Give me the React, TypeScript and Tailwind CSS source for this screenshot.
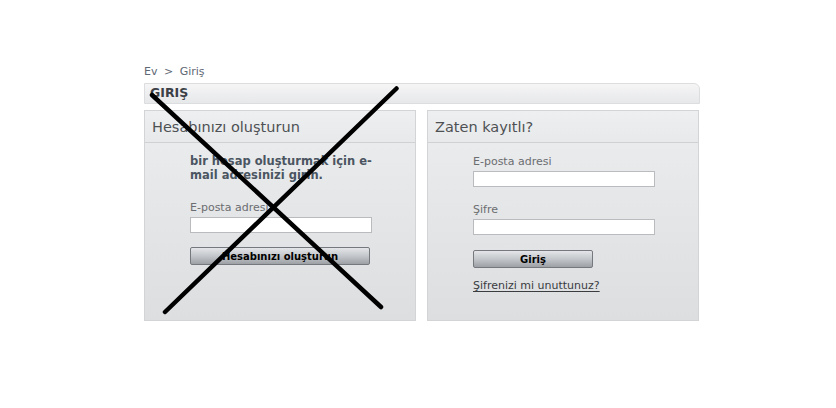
import React from 'react'

const font = "font-['DejaVu_Sans',Verdana,sans-serif]"

function Field({ label, top }: { label: string; top: string }) {
  return (
    <div className={top}>
      <div className="h-[14px] text-[11px] leading-[14px] text-[#6b6d70]">{label}</div>
      <div className="mt-[2px] h-[16px] w-[182px] border border-[#b9bbbe] bg-white" />
    </div>
  )
}

function Panel({ title, children }: { title: string; children: React.ReactNode }) {
  return (
    <div className="flex h-[211px] flex-col border border-[#d2d4d6] bg-[#ebecee]">
      <div className="flex h-[32px] items-center border-b border-[#cfd1d3] bg-gradient-to-b from-[#eeeff1] to-[#e8e9eb] pl-[7px] pt-[3px] text-[14.5px] text-[#4e5154]">
        {title}
      </div>
      <div className="flex-1 bg-gradient-to-b from-[#eaebed] to-[#dcdee0] pl-[45px]">{children}</div>
    </div>
  )
}

export default function App() {
  return (
    <div className={`relative h-[408px] w-[836px] overflow-hidden bg-white ${font}`}>
      <div className="ml-[144px] w-[556px] pt-[65px]">
        {/* breadcrumb */}
        <div className="h-[14px] text-[11px] leading-[14px] text-[#5f6974]">
          Ev <span className="mx-[3px]">&gt;</span> Giriş
        </div>

        {/* title bar */}
        <div className="mt-[4px] flex h-[21px] items-center rounded-tr-[6px] border border-[#dcdddf] bg-gradient-to-b from-[#f5f5f6] to-[#e7e8ea] pl-[5px] text-[12.5px] font-bold text-[#3c4047]">
          GIRIŞ
        </div>

        <div className="mt-[6px] grid w-[555px] grid-cols-[272px_272px] gap-[11px]">
          <Panel title="Hesabınızı oluşturun">
            <p className="pt-[11px] text-[11.5px] font-bold leading-[14px] text-[#4a5561]">
              bir hesap oluşturmak için e-
              <br />
              mail adresinizi girin.
            </p>
            <Field label="E-posta adresi" top="mt-[19px]" />
            <button className="mt-[14px] flex h-[18px] w-[180px] items-center justify-center rounded-[2px] border border-[#75797e] bg-gradient-to-b from-[#e4e6e9] via-[#c3c6ca] to-[#9da1a6] text-[10px] font-bold text-black">
              Hesabınızı oluşturun
            </button>
          </Panel>

          <Panel title="Zaten kayıtlı?">
            <Field label="E-posta adresi" top="pt-[12px]" />
            <Field label="Şifre" top="mt-[16px]" />
            <button className="mt-[15px] flex h-[18px] w-[120px] items-center justify-center rounded-[2px] border border-[#75797e] bg-gradient-to-b from-[#e4e6e9] via-[#c3c6ca] to-[#9da1a6] text-[10px] font-bold text-black">
              Giriş
            </button>
            <div className="mt-[11px] h-[14px] text-[11px] leading-[14px] text-[#3a3c3f] underline underline-offset-2">
              Şifrenizi mi unuttunuz?
            </div>
          </Panel>
        </div>
      </div>

      {/* hand-drawn cross over the left panel */}
      <svg className="pointer-events-none absolute inset-0" width="836" height="408">
        <line x1="152" y1="95" x2="381" y2="307" stroke="#000" strokeWidth="4.5" strokeLinecap="round" />
        <line x1="396.5" y1="88.5" x2="165" y2="312" stroke="#000" strokeWidth="4.5" strokeLinecap="round" />
      </svg>
    </div>
  )
}
